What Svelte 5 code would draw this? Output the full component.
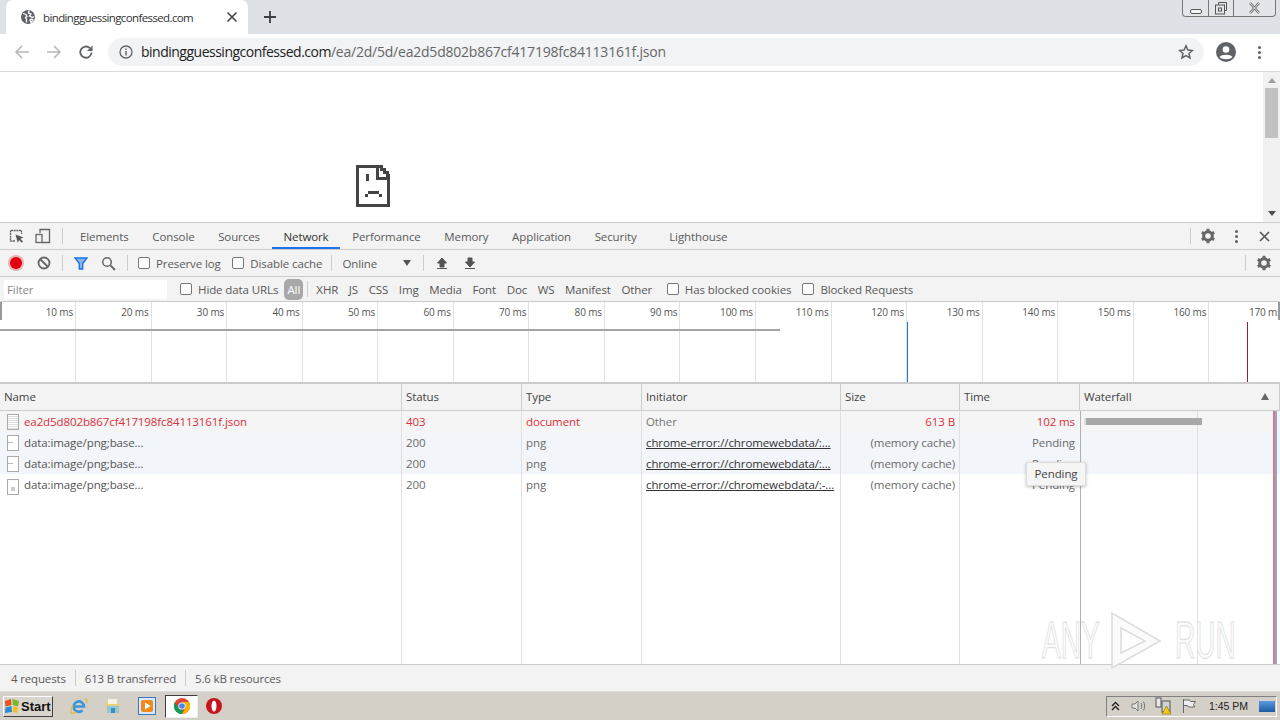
<script>
  const tabs = ['Elements','Console','Sources','Network','Performance','Memory','Application','Security','Lighthouse'];
  const types = ['XHR','JS','CSS','Img','Media','Font','Doc','WS','Manifest','Other'];
  const ticks = [10,20,30,40,50,60,70,80,90,100,110,120,130,140,150,160,170];
  const cols = ['Name','Status','Type','Initiator','Size','Time','Waterfall'];
  const rows = [
    {cls:'err', icon:'doc', name:'ea2d5d802b867cf417198fc84113161f.json', status:'403', type:'document', init:'Other', link:false, size:'613 B', time:'102 ms'},
    {cls:'blue', icon:'blank', name:'data:image/png;base...', status:'200', type:'png', init:'chrome-error://chromewebdata/:...', link:true, size:'(memory cache)', time:'Pending'},
    {cls:'blue', icon:'blank', name:'data:image/png;base...', status:'200', type:'png', init:'chrome-error://chromewebdata/:...', link:true, size:'(memory cache)', time:'Pending'},
    {cls:'', icon:'thumb', name:'data:image/png;base...', status:'200', type:'png', init:'chrome-error://chromewebdata/:-...', link:true, size:'(memory cache)', time:'Pending'}
  ];
</script>

<div class="screen">
  <div class="tabstrip">
    <div class="tab">
      <svg class="globe" width="16" height="16" viewBox="0 0 16 16"><circle cx="8" cy="8" r="7" fill="#5f6368"/><path d="M3 4.500l3 1 1 2-1.500 1 1 2v3M9 1.500l-.5 2.500 2.500 1-1.500 2 3 1.500 1.500-1M10 11l1.500-1 1.500 1-2 2.500z" fill="none" stroke="#fff" stroke-width="1.300"/></svg>
      <span class="tabtitle">bindingguessingconfessed.com</span>
      <svg class="tabx" width="12" height="12" viewBox="0 0 12 12"><path d="M1.500 1.500l9 9M10.500 1.500l-9 9" stroke="#444" stroke-width="1.600"/></svg>
    </div>
    <svg class="plus" width="14" height="14" viewBox="0 0 14 14"><path d="M7 1v12M1 7h12" stroke="#3c4043" stroke-width="1.800"/></svg>
    <div class="winbtns">
      <div class="wb min"><svg width="14" height="8" viewBox="0 0 14 8"><rect x="1.500" y="1.500" width="11" height="4" rx="1.500" fill="#f4f5f7" stroke="#555"/></svg></div>
      <div class="wb max"><svg width="14" height="14" viewBox="0 0 14 14"><path d="M4.500 3.500v-2h8v8h-2" fill="none" stroke="#555"/><rect x="1.500" y="4" width="9" height="9" fill="none" stroke="#555"/><rect x="4.500" y="7" width="3" height="3" fill="none" stroke="#555"/></svg></div>
      <div class="wb close"><svg width="13" height="12" viewBox="0 0 13 12"><path d="M2 1l9 10M11 1L2 11" stroke="#666" stroke-width="2.500"/><path d="M2 1l9 10M11 1L2 11" stroke="#e8eaed" stroke-width="1"/></svg></div>
    </div>
  </div>

  <div class="omnibar">
    <svg class="nav first" width="16" height="16" viewBox="0 0 16 16"><path d="M15 8H2M8 2L2 8l6 6" fill="none" stroke="#b5b8bc" stroke-width="1.600"/></svg>
    <svg class="nav" width="16" height="16" viewBox="0 0 16 16"><path d="M1 8h13M8 2l6 6-6 6" fill="none" stroke="#b5b8bc" stroke-width="1.600"/></svg>
    <svg class="nav" width="16" height="16" viewBox="0 0 16 16"><path d="M13.500 8.500a5.600 5.600 0 1 1-1.700-4.400" fill="none" stroke="#5f6368" stroke-width="1.800"/><path d="M14.500 1.500v5.500H9z" fill="#5f6368"/></svg>
    <div class="urlbox">
      <svg class="info" width="14" height="14" viewBox="0 0 14 14"><circle cx="7" cy="7" r="6" fill="none" stroke="#5f6368" stroke-width="1.300"/><path d="M7 6v4.500M7 3.500v1.500" stroke="#5f6368" stroke-width="1.400"/></svg>
      <span class="url"><span class="host">bindingguessingconfessed.com</span>/ea/2d/5d/ea2d5d802b867cf417198fc84113161f.json</span>
      <svg class="star" width="16" height="16" viewBox="0 0 16 16"><path d="M8 1.800l1.900 4.200 4.500.5-3.400 3 1 4.500L8 11.700 4 14l1-4.500-3.400-3 4.500-.5z" fill="none" stroke="#5f6368" stroke-width="1.500"/></svg>
    </div>
    <svg class="avatar" width="20" height="20" viewBox="0 0 20 20"><circle cx="10" cy="10" r="10" fill="#5f6368"/><circle cx="10" cy="7.500" r="3.300" fill="#fff"/><path d="M3.500 15c2-3 11-3 13 0-3 3-10 3-13 0z" fill="#fff"/></svg>
    <div class="kebab big"><i></i><i></i><i></i></div>
  </div>

  <div class="page">
    <svg class="sad" width="34" height="42" viewBox="0 0 34 42" shape-rendering="crispEdges"><path d="M1.500 1.500H25V4.500H28V7.500H31V10.500H32.500V40.500H1.500z" fill="#fff" stroke="#444" stroke-width="3"/><path d="M21.500 2V13.500H32" fill="none" stroke="#444" stroke-width="3"/><rect x="10" y="9" width="3" height="7" fill="#444"/><rect x="12" y="26" width="11" height="3" fill="#444"/><rect x="9" y="29" width="3" height="3" fill="#444"/><rect x="23" y="29" width="3" height="3" fill="#444"/></svg>
    <div class="vscroll">
      <span class="arr up"></span>
      <div class="thumb"></div>
      <span class="arr down"></span>
    </div>
  </div>

  <div class="devtools">
    <div class="bar tabsbar">
      <svg class="ins" width="16" height="16" viewBox="0 0 16 16"><path d="M6 13H1.500V2.500h11V6" fill="none" stroke="#666" stroke-width="1.300" stroke-dasharray="2 .6"/><path d="M6.500 6.500l8 3-3.200 1.300 2.700 2.800-1.200 1.200-2.700-2.800-1.300 3z" fill="#555"/></svg>
      <svg class="dev" width="16" height="16" viewBox="0 0 16 16"><path d="M5 5V1.500h9.500v13H7" fill="none" stroke="#666" stroke-width="1.300"/><rect x="1" y="6.500" width="6" height="8" fill="none" stroke="#666" stroke-width="1.300"/></svg>
      <span class="vsep tabsep"></span>
      {#each tabs as t}
        <span class="dtab" class:active={t==='Network'} class:lh={t==='Lighthouse'}>{t}</span>
      {/each}
      <span class="spring"></span>
      <span class="vsep"></span>
      <svg class="gear g1" width="16" height="16" viewBox="0 0 16 16"><circle cx="8" cy="8" r="4.300" fill="none" stroke="#666" stroke-width="3"/><path d="M8 .8v3M8 12.200v3M1.800 4.400l2.500 1.400M11.700 10.200l2.500 1.400M1.800 11.600l2.500-1.400M11.700 5.800l2.500-1.400" stroke="#666" stroke-width="3"/></svg>
      <div class="kebab dk"><i></i><i></i><i></i></div>
      <svg class="dtx" width="11" height="11" viewBox="0 0 11 11"><path d="M1 1l9 9M10 1l-9 9" stroke="#555" stroke-width="1.600"/></svg>
    </div>

    <div class="bar netbar">
      <span class="rec"></span>
      <svg class="clear" width="14" height="14" viewBox="0 0 14 14"><circle cx="7" cy="7" r="5.500" fill="none" stroke="#666" stroke-width="1.800"/><path d="M3 3l8 8" stroke="#666" stroke-width="1.800"/></svg>
      <span class="vsep s1"></span>
      <svg class="funnel" width="14" height="13" viewBox="0 0 14 13"><path d="M1 1h12L8.700 6.500V12H5.300V6.500z" fill="#8ab4e8" stroke="#1a73e8" stroke-width="1.400"/></svg>
      <svg class="search" width="15" height="15" viewBox="0 0 15 15"><circle cx="6" cy="6" r="4.300" fill="none" stroke="#666" stroke-width="1.500"/><path d="M9.500 9.500l4.500 4.500" stroke="#666" stroke-width="1.800"/></svg>
      <span class="vsep s2"></span>
      <label class="chk c1"><span class="box"></span>Preserve log</label>
      <label class="chk c2"><span class="box"></span>Disable cache</label>
      <span class="vsep s3"></span>
      <span class="online">Online</span>
      <span class="caret"></span>
      <span class="vsep s4"></span>
      <svg class="upd" width="12" height="13" viewBox="0 0 12 13"><path d="M6 1L1.500 6H4v4h4V6h2.500zM1 11.500h10" fill="#555" stroke="#555"/></svg>
      <svg class="dnl" width="12" height="13" viewBox="0 0 12 13"><path d="M4 1h4v4h2.500L6 10 1.500 5H4zM1 11.500h10" fill="#555" stroke="#555"/></svg>
      <span class="spring"></span>
      <span class="vsep"></span>
      <svg class="gear g2" width="16" height="16" viewBox="0 0 16 16"><circle cx="8" cy="8" r="4.300" fill="none" stroke="#666" stroke-width="3"/><path d="M8 .8v3M8 12.200v3M1.800 4.400l2.500 1.400M11.700 10.200l2.500 1.400M1.800 11.600l2.500-1.400M11.700 5.800l2.500-1.400" stroke="#666" stroke-width="3"/></svg>
    </div>

    <div class="bar filterbar">
      <div class="filter">Filter</div>
      <label class="chk c3"><span class="box"></span>Hide data URLs</label>
      <span class="allpill">All</span>
      <span class="vsep s5"></span>
      {#each types as t}<span class="ftype">{t}</span>{/each}
      <label class="chk c4"><span class="box"></span>Has blocked cookies</label>
      <label class="chk c5"><span class="box"></span>Blocked Requests</label>
    </div>

    <div class="overview">
      <div class="ticks">
        {#each ticks as t}<div class="tick"><span>{t} ms</span></div>{/each}
      </div>
      <div class="ovbar"></div>
      <div class="ovblue"></div>
      <div class="ovred"></div>
      <div class="grip left"></div>
      <div class="grip right"></div>
    </div>

    <div class="table">
      <div class="row head">
        {#each cols as c}<div class="cell">{c}</div>{/each}
        <span class="sort"></span>
      </div>
      <div class="tbody">
        {#each rows as r}
          <div class="row {r.cls}">
            <div class="cell namecell">
              <span class="fileic {r.icon}"></span>{r.name}
            </div>
            <div class="cell">{r.status}</div>
            <div class="cell">{r.type}</div>
            <div class="cell" class:lnk={r.link} class:oth={!r.link}>{r.init}</div>
            <div class="cell num">{r.size}</div>
            <div class="cell num">{r.time}</div>
            <div class="cell"></div>
          </div>
        {/each}
        <div class="gridlines">
          <i style="left:401px"></i><i style="left:521px"></i><i style="left:641px"></i><i style="left:840px"></i><i style="left:959px"></i><i class="dark" style="left:1080px"></i><i style="left:1197px"></i>
          <i class="dom" style="left:1273px"></i><i class="load" style="left:1275px"></i>
        </div>
        <div class="wfbar"></div>
        <div class="tooltip">Pending</div>
      </div>
    </div>

    <div class="status">
      <span>4 requests</span><span class="vsep"></span><span>613 B transferred</span><span class="vsep"></span><span>5.6 kB resources</span>
    </div>
  </div>

  <div class="taskbar">
    <div class="start">
      <svg width="16" height="16" viewBox="0 0 16 16"><path d="M1 3l6-2 .5 6-6 1.500z" fill="#e8541c"/><path d="M8.500 1l6.500 2-1 5.500L8.800 7z" fill="#7cb52b"/><path d="M1.500 9.500l6-1.500.5 6-7 1z" fill="#2d8ad8"/><path d="M9 8l5 1.500-1 5.500-4 -1z" fill="#f4c01e"/></svg>
      <b>Start</b>
    </div>
    <svg class="t-ie" width="18" height="18" viewBox="0 0 18 18"><path d="M4.500 9.500h9.500a5.200 5.200 0 1 0-1.500 3.800" fill="none" stroke="#3a94dc" stroke-width="2.600"/><path d="M14.500 2.500c2.500-1.500 3 1 1.500 3.500M3 8C1 12 0 16 2 16.500c1.500.3 3-.8 4-1.800" fill="none" stroke="#e2bb3e" stroke-width="1.400"/></svg>
    <svg class="t-ex" width="18" height="18" viewBox="0 0 18 18"><path d="M2 5h6l1 2h7v9H2z" fill="#e8cf7c"/><rect x="4" y="2" width="9" height="5" fill="#f4f2e0"/><rect x="3" y="9" width="12" height="7" fill="#8fc7e0"/><rect x="7" y="11" width="4" height="5" fill="#3c8fb8"/></svg>
    <svg class="t-wm" width="18" height="18" viewBox="0 0 18 18"><rect x=".5" y=".5" width="17" height="17" fill="#d8e8f8" stroke="#3c78c0"/><rect x="3" y="3" width="12" height="12" rx="2" fill="#f08a1c"/><path d="M7 5.500L12.500 9 7 12.500z" fill="#fff"/></svg>
    <div class="chromebtn">
      <svg width="16" height="16" viewBox="0 0 16 16"><circle cx="8" cy="8" r="8" fill="#db4437"/><path d="M8 16A8 8 0 0 1 1 4l4 7 4 1z" fill="#0f9d58"/><path d="M8 16l3.500-6L8 4h7a8 8 0 0 1-7 12z" fill="#f4b400"/><circle cx="8" cy="8" r="3.600" fill="#fff"/><circle cx="8" cy="8" r="2.800" fill="#4285f4"/></svg>
    </div>
    <svg class="t-op" width="16" height="16" viewBox="0 0 16 16"><circle cx="8" cy="8" r="8" fill="#c8141c"/><ellipse cx="8" cy="8" rx="2.500" ry="5.500" fill="#fff"/></svg>
    <span class="spring"></span>
    <div class="tray">
      <svg class="tr-up" width="9" height="10" viewBox="0 0 9 10"><path d="M1 5l3.500-3.500L8 5M1 9l3.500-3.500L8 9" fill="none" stroke="#222" stroke-width="1.400"/></svg>
      <svg class="tr-sp" width="16" height="16" viewBox="0 0 16 16"><path d="M1 6h3l3-3v10l-3-3H1z" fill="#e4e4e0" stroke="#777"/><path d="M10 5c1 2 1 4 0 6M12.500 3.500c1.500 3 1.500 6 0 9" fill="none" stroke="#777"/></svg>
      <svg class="tr-nt" width="18" height="18" viewBox="0 0 18 18"><rect x="1" y="1" width="5" height="9" fill="#e8e8e4" stroke="#555"/><rect x="7" y="4" width="8" height="11" fill="#d0d4d0" stroke="#555"/><path d="M11.500 9l4.500 8H7z" fill="#f4c81c" stroke="#8a6a00" stroke-width=".6"/></svg>
      <svg class="tr-fl" width="16" height="16" viewBox="0 0 16 16"><path d="M2.500 1v14M2.500 2h6l1 1.500h5l-2 3 1 2.500h-6l-1-1.500h-4" fill="#eee" stroke="#666"/></svg>
      <span class="clock">1:45 PM</span>
      <span class="showdesk"></span>
    </div>
  </div>

  <div class="mark">
    <span class="m1">ANY</span>
    <svg width="56" height="62" viewBox="0 0 56 62"><path d="M4 3v55l48-27zM13 18v25l24-12z" fill="#fbfbfb" fill-rule="evenodd" stroke="#dcdcdc" stroke-width="1.500"/></svg>
    <span class="m2">RUN</span>
  </div>
</div>

<style>
  :global(body){margin:0;background:#fff;}
  .screen{position:relative;width:1280px;height:720px;overflow:hidden;display:flex;flex-direction:column;font-family:"Open Sans","Noto Sans",sans-serif;font-size:11.500px;letter-spacing:-.1px;color:#5a5a5a;}
  svg{display:block;flex:none;}
  .spring{flex:1;}

  .tabstrip{height:34px;flex:none;background:#dee1e6;display:flex;align-items:flex-start;padding-left:6px;box-sizing:border-box;}
  .tab{width:242px;height:34px;background:#fff;border-radius:7px 7px 0 0;display:flex;align-items:center;box-sizing:border-box;padding-left:14px;flex:none;}
  .globe{margin-right:7px;}
  .tabtitle{font-size:11.500px;color:#333;letter-spacing:-.62px;white-space:nowrap;width:183px;flex:none;}
  .plus{margin:10px 0 0 15px;}
  .winbtns{margin-left:auto;display:flex;height:17px;border:1px solid #777;border-top:0;border-radius:0 0 4px 4px;box-sizing:border-box;background:#e3e5ea;margin-right:4px;}
  .wb{display:flex;align-items:center;justify-content:center;height:16px;}
  .min{width:25px;border-right:1px solid #777;align-items:flex-end;}
  .max{width:24px;border-right:1px solid #777;}
  .close{width:41px;}

  .omnibar{flex:none;background:#fff;border-bottom:1px solid #dadada;display:flex;align-items:center;padding-bottom:1px;box-sizing:border-box;height:38px;}
  .nav{margin-left:16px;}
  .nav.first{margin-left:14px;}
  .urlbox{margin-left:14px;width:1096px;height:28px;border-radius:14px;background:#f1f3f4;display:flex;align-items:center;flex:none;box-sizing:border-box;padding-left:11px;}
  .info{margin-right:8px;}
  .url{font-size:14px;color:#666;letter-spacing:-.22px;white-space:nowrap;margin-top:-2px;}
  .host{color:#222;letter-spacing:-.5px;}
  .star{margin-left:auto;margin-right:10px;}
  .avatar{margin-left:12px;}
  .kebab{display:flex;flex-direction:column;gap:2px;}
  .kebab i{width:3px;height:3px;border-radius:50%;background:#5f6368;display:block;}
  .kebab.big{margin-left:21.500px;}

  .page{height:150px;flex:none;background:#fff;display:flex;justify-content:space-between;overflow:hidden;}
  .sad{margin:93px 0 0 356px;}
  .vscroll{width:17px;background:#f1f1f1;display:flex;flex-direction:column;align-items:center;}
  .arr{width:0;height:0;border-left:4.500px solid transparent;border-right:4.500px solid transparent;}
  .arr.up{border-bottom:5px solid #a0a0a0;margin-top:6px;}
  .arr.down{border-top:5px solid #505050;margin-top:auto;margin-bottom:6px;}
  .thumb{width:13px;height:50px;background:#c1c1c1;margin-top:5px;}

  .devtools{flex:1;min-height:0;display:flex;flex-direction:column;background:#fff;}
  .bar{flex:none;background:#f3f3f3;display:flex;align-items:center;box-sizing:border-box;border-bottom:1px solid #ccc;white-space:nowrap;color:#5a5a5a;}
  .tabsbar{height:28px;border-top:1px solid #ccc;}
  .netbar{height:27px;}
  .filterbar{height:25px;}
  .vsep{width:1px;height:16px;background:#ccc;flex:none;display:block;}
  .ins{margin-left:9px;}
  .dev{margin-left:10px;}
  .tabsep{margin:0 5.200px 0 11px;}
  .dtab{padding:0 11.800px;height:26px;line-height:28px;box-sizing:border-box;}
  .dtab.active{color:#333;border-bottom:2px solid #1a73e8;}
  .dtab.lh{margin-left:9px;}
  .g1{margin-left:9px;}
  .dk{margin-left:19.500px;}
  .dtx{margin:0 10px 0 21px;}
  .g2{margin:0 8px 0 10px;}

  .rec{width:12px;height:12px;border-radius:50%;background:#e6000f;box-shadow:0 0 0 2px #e8b4b4;margin-left:10px;}
  .clear{margin-left:15px;}
  .s1{margin-left:11px;}
  .funnel{margin-left:11px;}
  .search{margin-left:13px;}
  .s2{margin-left:11px;}
  .chk{display:flex;align-items:center;}
  .box{width:10px;height:10px;border:1px solid #767676;border-radius:2px;background:#fff;margin-right:6px;flex:none;}
  .c1{margin-left:10px;}
  .c2{margin-left:11.500px;}
  .s3{margin-left:9px;}
  .online{margin-left:10px;}
  .caret{width:0;height:0;border-left:4px solid transparent;border-right:4px solid transparent;border-top:6px solid #555;margin-left:26px;}
  .s4{margin-left:12px;}
  .upd{margin-left:12px;}
  .dnl{margin-left:16px;}

  .filter{width:163px;height:19px;margin-left:4px;background:#fff;padding-left:3px;box-sizing:border-box;color:#8a8a8a;line-height:19px;margin-top:1px;}
  .c3{margin-left:13px;}
  .allpill{background:#a8a8a8;color:#fff;border-radius:5px;height:21px;line-height:21px;width:19px;text-align:center;margin-left:6px;}
  .s5{margin:0 8px 0 4px;}
  .ftype{margin-right:10.600px;color:#555;}
  .c4{margin-left:4px;}
  .c5{margin-left:11px;}

  .overview{height:82px;flex:none;position:relative;border-bottom:2px solid #ccc;box-sizing:border-box;background:#fff;overflow:hidden;}
  .ticks{display:flex;height:100%;margin-left:.5px;}
  .tick{width:75.550px;flex:none;box-sizing:border-box;border-right:1px solid #e2e2e2;text-align:right;padding:3px 2px 0 0;font-size:10px;letter-spacing:-.15px;color:#555;white-space:nowrap;}
  .ovbar{position:absolute;left:0;top:27px;width:780px;height:2px;background:#a4a4a4;}
  .ovblue{position:absolute;left:907px;top:20px;width:1px;height:60px;background:#1a73e8;}
  .ovred{position:absolute;left:1247px;top:20px;width:1px;height:60px;background:#a02020;}
  .grip{position:absolute;top:0;height:18px;width:2px;background:#999;}
  .grip.left{left:0;}
  .grip.right{right:0;}

  .table{flex:1;min-height:0;display:flex;flex-direction:column;background:#fff;}
  .row{display:grid;grid-template-columns:402px 120px 120px 199px 119px 120px 200px;height:21px;line-height:21px;flex:none;}
  .head{height:27px;line-height:26px;background:#f3f3f3;border-bottom:1px solid #ccc;box-sizing:border-box;position:relative;}
  .head .cell{border-right:1px solid #ccc;color:#444;}
  .sort{position:absolute;right:11px;top:9px;width:0;height:0;border-left:4px solid transparent;border-right:4px solid transparent;border-bottom:7px solid #666;}
  .tbody{flex:1;position:relative;overflow:hidden;}
  .cell{padding:0 5px 0 4px;box-sizing:border-box;white-space:nowrap;overflow:hidden;color:#6a6a6a;}
  .err{background:#f5f5f5;}
  .err .cell{color:#d9303a;}
  .err .oth{color:#777;}
  .blue{background:#f2f5fa;}
  .namecell{padding-left:7px;display:flex;align-items:center;color:#555;}
  .err .namecell{color:#d9303a;}
  .fileic{width:10px;height:14px;border:1px solid #aaa;background:#fff;margin-right:5px;flex:none;}
  .fileic.doc{background:repeating-linear-gradient(#fff 0 1px,#ddd 1px 2px);}
  .fileic.blank{background:linear-gradient(#bbb,#bbb) 0 6px/5px 1px no-repeat #fff;}
  .fileic.thumb{background:linear-gradient(#ccc,#ccc) 3px 7px/4px 4px no-repeat #fff;}
  .lnk{color:#333;text-decoration:underline;}
  .num{text-align:right;}
  .gridlines{position:absolute;inset:0;pointer-events:none;}
  .gridlines i{position:absolute;top:0;bottom:0;width:1px;background:#e0e0e0;}
  .gridlines i.dark{background:#b0b0b0;}
  .gridlines i.dom{background:#e07a7a;width:2px;}
  .gridlines i.load{background:#8aa8e0;width:2px;}
  .wfbar{position:absolute;left:1086px;top:7px;width:116px;height:7px;background:#a8a8a8;box-shadow:-2px 0 0 #dcdcdc;}
  .tooltip{position:absolute;left:1026px;top:51px;width:60px;height:24px;line-height:22px;text-align:center;box-sizing:border-box;background:#f5f5f5;border:1px solid #ddd;box-shadow:0 1px 3px rgba(0,0,0,.25);color:#444;}

  .mark{position:absolute;left:1042px;top:610px;width:192px;height:62px;display:flex;align-items:center;pointer-events:none;font-family:"Liberation Sans",sans-serif;font-size:51px;line-height:62px;letter-spacing:0;color:#fbfbfb;-webkit-text-stroke:1px #dcdcdc;white-space:nowrap;}
  .mark span{display:block;flex:none;transform:scaleX(.55);transform-origin:left center;}
  .m1{width:66px;}
  .mark svg{margin-right:11px;}
  .m2{width:58px;}

  .status{height:28px;flex:none;background:#f3f3f3;border-top:1px solid #ccc;box-sizing:border-box;display:flex;align-items:center;gap:9px;padding-left:11px;border-bottom:1px solid #ddd;letter-spacing:-.16px;}
  .taskbar{height:28px;flex:none;background:#d4d0c8;display:flex;align-items:center;box-sizing:border-box;font-size:12px;letter-spacing:0;}
  .start{width:48px;height:19px;margin-left:3px;background:#d9d5ce;border:1px solid;border-color:#fff #404040 #404040 #fff;display:flex;align-items:center;gap:1px;color:#111;font-family:"Liberation Sans",sans-serif;font-size:13px;}
  .t-ie{margin-left:17px;}
  .t-ex{margin-left:16px;}
  .t-wm{margin-left:16px;}
  .chromebtn{margin-left:9px;width:31px;height:21px;background:#fff;border:1px solid;border-color:#404040 #eee #eee #404040;display:flex;align-items:center;justify-content:center;}
  .t-op{margin-left:8px;}
  .tray{width:171px;height:21px;border:1px solid;border-color:#808080 #fff #fff #808080;display:flex;align-items:center;margin-right:3px;box-sizing:border-box;}
  .tr-up{margin-left:4px;}
  .tr-sp{margin-left:11px;}
  .tr-nt{margin-left:8px;}
  .tr-fl{margin-left:8px;}
  .clock{margin-left:12px;color:#222;font-family:"Liberation Sans",sans-serif;font-size:10.500px;white-space:nowrap;}
  .showdesk{width:16px;height:11px;background:linear-gradient(#5a9ae0,#1c5ca8);margin-left:auto;margin-right:1px;}
</style>
